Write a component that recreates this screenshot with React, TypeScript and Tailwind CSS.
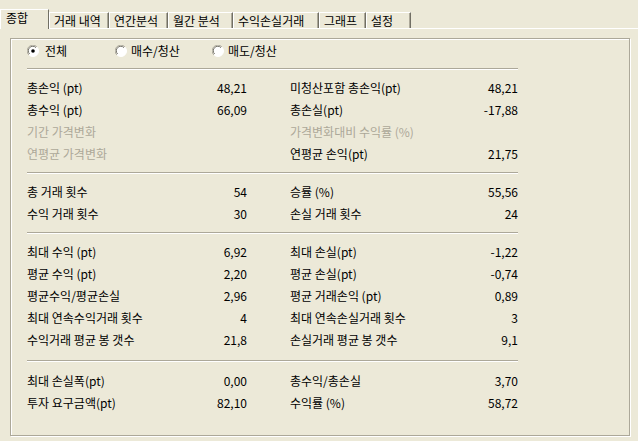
type Row = { l: string; lv: string; r: string; rv: string; ld?: boolean; rd?: boolean };

const groups: Row[][] = [
  [
    { l: '총손익 (pt)', lv: '48,21', r: '미청산포함 총손익(pt)', rv: '48,21' },
    { l: '총수익 (pt)', lv: '66,09', r: '총손실(pt)', rv: '-17,88' },
    { l: '기간 가격변화', lv: '', r: '가격변화대비 수익률 (%)', rv: '', ld: true, rd: true },
    { l: '연평균 가격변화', lv: '', r: '연평균 손익(pt)', rv: '21,75', ld: true },
  ],
  [
    { l: '총 거래 횟수', lv: '54', r: '승률 (%)', rv: '55,56' },
    { l: '수익 거래 횟수', lv: '30', r: '손실 거래 횟수', rv: '24' },
  ],
  [
    { l: '최대 수익 (pt)', lv: '6,92', r: '최대 손실(pt)', rv: '-1,22' },
    { l: '평균 수익 (pt)', lv: '2,20', r: '평균 손실(pt)', rv: '-0,74' },
    { l: '평균수익/평균손실', lv: '2,96', r: '평균 거래손익 (pt)', rv: '0,89' },
    { l: '최대 연속수익거래 횟수', lv: '4', r: '최대 연속손실거래 횟수', rv: '3' },
    { l: '수익거래 평균 봉 갯수', lv: '21,8', r: '손실거래 평균 봉 갯수', rv: '9,1' },
  ],
  [
    { l: '최대 손실폭(pt)', lv: '0,00', r: '총수익/총손실', rv: '3,70' },
    { l: '투자 요구금액(pt)', lv: '82,10', r: '수익률 (%)', rv: '58,72' },
  ],
];

const tabs = [
  { label: '거래 내역', w: 'w-[60px]' },
  { label: '연간분석', w: 'w-[59px]' },
  { label: '월간 분석', w: 'w-[65px]' },
  { label: '수익손실거래', w: 'w-[86px]' },
  { label: '그래프', w: 'w-[47px]' },
  { label: '설정', w: 'w-[45px]' },
];

const radios = [
  { label: '전체', checked: true, w: 'w-[88px]' },
  { label: '매수/청산', checked: false, w: 'w-[97px]' },
  { label: '매도/청산', checked: false, w: 'w-[100px]' },
];

function Radio({ checked }: { checked?: boolean }) {
  return (
    <svg width="12" height="12" viewBox="0 0 12 12" className="shrink-0">
      <circle cx="6" cy="6" r="5.5" fill="#fff" stroke="#fff" />
      <path d="M1.8 9.9 A5.2 5.2 0 0 1 9.9 1.8" fill="none" stroke="#ACA899" strokeWidth="1" />
      <path d="M2.6 9 A4.2 4.2 0 0 1 9 2.6" fill="none" stroke="#716F64" strokeWidth="1" />
      {checked && <circle cx="6" cy="6" r="1.8" fill="#000" />}
    </svg>
  );
}

function Sep({ m }: { m: string }) {
  return <div className={`h-[2px] border-t border-[#ACA899] border-b border-b-white ${m}`} />;
}

function StatRow({ row }: { row: Row }) {
  return (
    <div className="flex h-[22px] items-center">
      <div className={`flex w-[220px] justify-between ${row.ld ? 'text-[#ACA899]' : 'text-black'}`}>
        <span>{row.l}</span>
        <span>{row.lv}</span>
      </div>
      <div className={`ml-[43px] flex w-[228px] justify-between ${row.rd ? 'text-[#ACA899]' : 'text-black'}`}>
        <span>{row.r}</span>
        <span>{row.rv}</span>
      </div>
    </div>
  );
}

export default function App() {
  return (
    <div className="h-[441px] w-[638px] overflow-hidden bg-[#ECE9D8] font-['Noto_Sans_CJK_KR',sans-serif] text-[12px] leading-none text-black">
      {/* tab strip */}
      <div className="relative flex h-[29px] items-start">
        <div className="absolute bottom-0 left-0 right-0 h-px bg-white" />
        <div className="relative z-10 mt-[9px] flex h-[20px] w-[49px] items-start border-t border-l border-white border-r border-r-[#716F64] bg-[#ECE9D8] pl-[5px] pt-[2px]">
          종합
        </div>
        {tabs.map((t) => (
          <div
            key={t.label}
            className={`mt-[12px] flex h-[16px] items-start border-t border-l border-white border-r border-r-[#716F64] pl-[4px] pt-[2px] shadow-[inset_-1px_0_0_#ACA899] ${t.w}`}
          >
            {t.label}
          </div>
        ))}
      </div>

      {/* page */}
      <div className="ml-[10px] mt-[9px] h-[398px] w-[620px] border border-[#ACA899] pl-[16px] pt-[2px] shadow-[inset_1px_1px_0_#fff,1px_1px_0_#fff]">
        <div className="flex h-[19px] items-center">
          {radios.map((r) => (
            <div key={r.label} className={`flex items-center ${r.w}`}>
              <Radio checked={r.checked} />
              <span className={r.checked ? 'ml-[6px]' : 'ml-[4px]'}>{r.label}</span>
            </div>
          ))}
        </div>
        <div className="w-[491px]">
          <Sep m="mt-[8px] mb-[7px]" />
          {groups[0].map((r) => <StatRow key={r.l} row={r} />)}
          <Sep m="my-[7px]" />
          {groups[1].map((r) => <StatRow key={r.l} row={r} />)}
          <Sep m="my-[7px]" />
          {groups[2].map((r) => <StatRow key={r.l} row={r} />)}
          <Sep m="mt-[9px] mb-[8px]" />
          {groups[3].map((r) => <StatRow key={r.l} row={r} />)}
        </div>
      </div>
    </div>
  );
}
